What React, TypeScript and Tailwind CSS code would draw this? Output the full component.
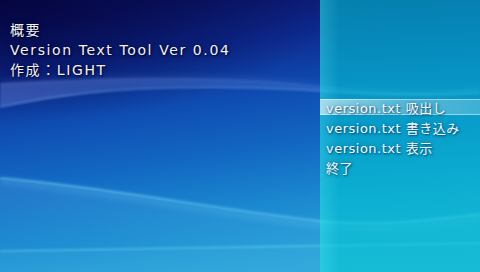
import React from "react";

const Waves = () => (
  <svg
    className="absolute inset-0"
    width="480"
    height="272"
    viewBox="0 0 480 272"
    xmlns="http://www.w3.org/2000/svg"
  >
    <defs>
      <linearGradient id="band" x1="0" y1="0" x2="1" y2="0">
        <stop offset="0" stopColor="#8fa8ff" stopOpacity="0.3" />
        <stop offset="0.6" stopColor="#7fb4ff" stopOpacity="0.16" />
        <stop offset="1" stopColor="#80e0ff" stopOpacity="0.1" />
      </linearGradient>
      <linearGradient id="lower" x1="0" y1="0" x2="0" y2="1">
        <stop offset="0" stopColor="#9fe0ff" stopOpacity="0.14" />
        <stop offset="1" stopColor="#9fe0ff" stopOpacity="0" />
      </linearGradient>
      <filter id="blur1" x="-10%" y="-50%" width="120%" height="200%">
        <feGaussianBlur stdDeviation="1.2" />
      </filter>
      <filter id="blur3" x="-10%" y="-50%" width="120%" height="200%">
        <feGaussianBlur stdDeviation="3" />
      </filter>
    </defs>
    <path
      d="M0,83 C120,76 240,75 320,86 C400,95 440,92 480,88 L480,93 C430,97 380,95 320,91 C250,86 150,86 100,92 C60,96 30,101 0,107 Z"
      fill="url(#band)"
      filter="url(#blur1)"
    />
    <path
      d="M0,107 C40,99 80,92 140,89 C210,86 280,88 320,91 C380,95 430,96 480,93"
      fill="none"
      stroke="#a8c8ff"
      strokeOpacity="0.45"
      strokeWidth="1.2"
      filter="url(#blur1)"
    />
    <path
      d="M0,83 C120,76 240,75 320,86 C400,95 440,92 480,88"
      fill="none"
      stroke="#b0c0ff"
      strokeOpacity="0.22"
      strokeWidth="2"
      filter="url(#blur3)"
    />
    <path
      d="M0,178 C100,186 220,210 320,221 C380,227 440,219 480,214 L480,250 L0,250 Z"
      fill="url(#lower)"
    />
    <path
      d="M0,178 C100,186 220,210 320,221 C380,227 440,219 480,214"
      fill="none"
      stroke="#7fe4ff"
      strokeOpacity="0.55"
      strokeWidth="1.3"
      filter="url(#blur1)"
    />
    <path
      d="M0,181 C100,190 220,214 320,225 C380,231 440,223 480,218"
      fill="none"
      stroke="#7fe4ff"
      strokeOpacity="0.25"
      strokeWidth="4"
      filter="url(#blur3)"
    />
    <path
      d="M0,251 C150,249 300,246 480,243 L480,272 L0,272 Z"
      fill="#5fd0f0"
      fillOpacity="0.1"
    />
    <path
      d="M0,251 C150,249 300,246 480,243"
      fill="none"
      stroke="#8ff0ff"
      strokeOpacity="0.6"
      strokeWidth="1.2"
      filter="url(#blur1)"
    />
  </svg>
);

const menu = ["version.txt 吸出し", "version.txt 書き込み", "version.txt 表示", "終了"];

export default function App() {
  return (
    <div className="relative w-[480px] h-[272px] overflow-hidden bg-[radial-gradient(ellipse_70%_45%_at_0%_0%,rgba(4,4,60,0.85),transparent),linear-gradient(172deg,#0a0c58_0%,#0d2a90_22%,#0f4fb4_40%,#1268c2_55%,#1a86cf_70%,#289fd8_85%,#33abdc_100%)]">
      <Waves />
      <div className="relative flex flex-row w-full h-full font-['DejaVu_Sans','Noto_Sans_CJK_JP',sans-serif]">
        <div className="flex-1 flex flex-col pl-[10px] pt-[20px] text-[14px] leading-[20px] tracking-[1.6px] text-[#f2f2f2] [text-shadow:1px_1px_2px_rgba(0,0,40,0.95),0_0_5px_rgba(0,0,50,0.7)]">
          <div>概要</div>
          <div>Version Text Tool Ver 0.04</div>
          <div>作成：LIGHT</div>
        </div>
        <div className="w-[160px] h-full flex flex-col pt-[99px] bg-[linear-gradient(90deg,rgba(40,220,228,0.64)_0%,rgba(0,200,210,0.58)_12%,rgba(0,198,208,0.56)_100%)]">
          {menu.map((m, i) => (
            <div key={m} className="relative h-[20px]">
              {i === 0 && (
                <div className="absolute left-0 right-0 top-0 h-[16px] border-y border-white/45 bg-[linear-gradient(90deg,rgba(255,255,255,0.6)_0%,rgba(255,255,255,0.32)_50%,rgba(255,255,255,0.22)_100%)]" />
              )}
              <div className="relative pl-[6px] text-[13px] leading-[20px] tracking-[0.5px] text-[#f4fbff] [text-shadow:1px_1px_2px_rgba(0,50,80,0.75),0_0_4px_rgba(0,60,90,0.45)] whitespace-nowrap">
                {m}
              </div>
            </div>
          ))}
        </div>
      </div>
    </div>
  );
}
